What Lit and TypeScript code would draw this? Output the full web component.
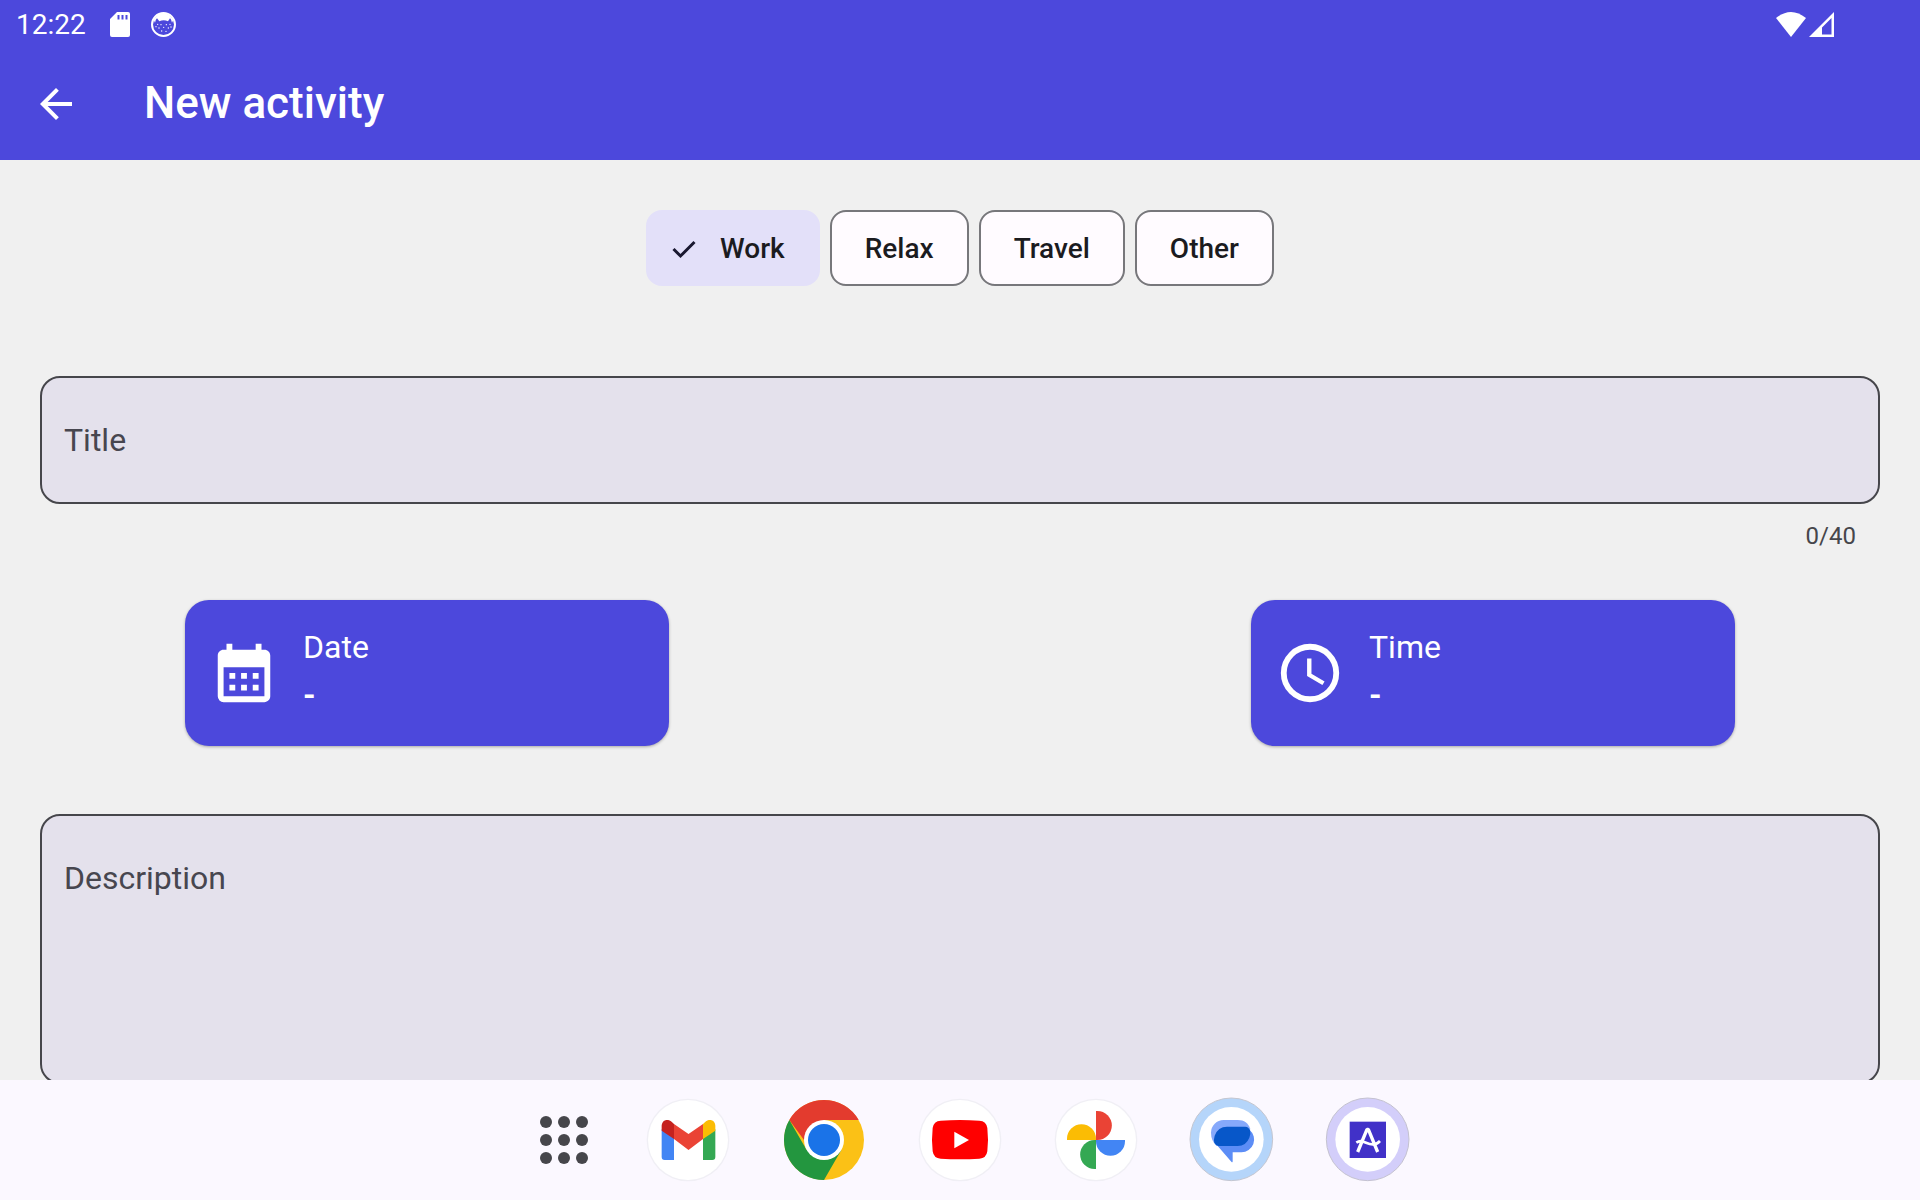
import { LitElement, html, css, svg } from "lit";
import { customElement, state } from "lit/decorators.js";
import { classMap } from "lit/directives/class-map.js";

const sdCard = html`<svg class="sd" viewBox="0 0 20 25" aria-hidden="true">
  <path fill="#fff" fill-rule="evenodd" d="M7 0H18a2 2 0 0 1 2 2V23a2 2 0 0 1-2 2H2a2 2 0 0 1-2-2V7zM7.500 3v4.500h2V3zM11.500 3v4.500h2V3zM15.500 3v4.500h2V3z"/>
</svg>`;

const catBadge = html`<svg class="cat" viewBox="0 0 75 75" aria-hidden="true">
  <circle cx="37.500" cy="37.500" r="34.500" fill="none" stroke="#fff" stroke-width="6"/>
  <path fill="#fff" d="M8 24Q20 3 37 3T67 24L63 32Q60 20 57 19L51 28Q38 22 25 28L18 19Q14 21 12 32z"/>
  <g fill="#fff">
    <circle cx="20" cy="37" r="2"/><circle cx="30" cy="38" r="2"/><circle cx="46" cy="38" r="2"/>
    <circle cx="57" cy="37" r="2"/><circle cx="24" cy="48" r="2"/><circle cx="38" cy="46" r="2"/>
    <circle cx="52" cy="48" r="2"/><circle cx="32" cy="57" r="2"/><circle cx="45" cy="58" r="2"/>
    <circle cx="60" cy="45" r="2"/><circle cx="15" cy="44" r="2"/>
  </g>
</svg>`;

const wifi = html`<svg class="wifi" viewBox="0 0 30 25" aria-hidden="true">
  <path fill="#fff" d="M0 6Q15-6 30 6L15 25z"/>
</svg>`;

const signal = html`<svg class="signal" viewBox="0 0 25 25" aria-hidden="true">
  <path fill="#fff" fill-rule="evenodd" d="M25 0V25H0zM22.500 6L13 15.500V22.500H22.500z"/>
</svg>`;

const backArrow = html`<svg viewBox="0 0 24 24" aria-hidden="true">
  <path fill="#fff" d="M20 11H7.830l5.590-5.590L12 4l-8 8 8 8 1.410-1.410L7.830 13H20v-2z"/>
</svg>`;

const check = html`<svg class="check" viewBox="0 0 24 20" aria-hidden="true">
  <path fill="none" stroke="#1a1830" stroke-width="3" d="M1.500 10L8.500 17L22.500 3"/>
</svg>`;

const calendar = html`<svg class="glyph" viewBox="0 0 24 24" aria-hidden="true">
  <path fill="#fff" fill-rule="evenodd" d="M19 4h-1V2h-2v2H8V2H6v2H5c-1.110 0-2 .9-2 2v14a2 2 0 0 0 2 2h14c1.100 0 2-.9 2-2V6c0-1.100-.9-2-2-2zm0 16H5V10h14z"/>
  <path fill="#fff" d="M7 12h2v2H7zM11 12h2v2h-2zM15 12h2v2h-2zM7 16h2v2H7zM11 16h2v2h-2zM15 16h2v2h-2z"/>
</svg>`;

const clock = html`<svg class="glyph" viewBox="0 0 24 24" aria-hidden="true">
  <circle cx="12" cy="12" r="9" fill="none" stroke="#fff" stroke-width="2"/>
  <path fill="#fff" d="M12.500 7H11v6l5.250 3.150.75-1.230-4.500-2.670z"/>
</svg>`;

const plate = svg`<circle cx="120" cy="120" r="124" fill="#f0eff5"/><circle cx="120" cy="120" r="120" fill="#fff"/>`;

const gmail = svg`${plate}
  <path fill="#4285f4" d="M41 88H78V180H50a9 9 0 0 1-9-9z"/>
  <path fill="#34a853" d="M165 88H202V171a9 9 0 0 1-9 9H165z"/>
  <path fill="#ea4335" d="M78 72L121.500 102L165 72V117L121.500 150L78 117z"/>
  <path fill="#c5221f" d="M41 92V78C41 60 58 55 69 64L78 72V117z"/>
  <path fill="#fbbc04" d="M202 92V78C202 60 185 55 174 64L165 72V117z"/>`;

const chrome = svg`
  <circle cx="120" cy="120" r="120" fill="#fbc116"/>
  <path fill="#e33b2e" d="M16 60A120 120 0 0 1 224 60H120V120H60z"/>
  <path fill="#23963f" d="M16 60A120 120 0 0 0 120 240L172 150L120 120L68 150z"/>
  <circle cx="120" cy="120" r="60" fill="#fff"/>
  <circle cx="120" cy="120" r="48" fill="#1a73e8"/>`;

const youtube = svg`${plate}
  <path fill="#f00" d="M62 62Q120 58 178 62Q199 63 202 84Q206 119 202 154Q199 175 178 176Q120 180 62 176Q41 175 38 154Q34 119 38 84Q41 63 62 62z"/>
  <path fill="#fff" d="M103 95L147 120L103 145z"/>`;

const photos = svg`${plate}
  <path fill="#ea4335" d="M120 33h4a43.500 43.500 0 0 1 0 87h-4z"/>
  <path fill="#4285f4" d="M207 120v4a43.500 43.500 0 0 1-87 0v-4z"/>
  <path fill="#34a853" d="M120 207h-4a43.500 43.500 0 0 1 0-87h4z"/>
  <path fill="#fbbc04" d="M33 120v-4a43.500 43.500 0 0 1 87 0v4z"/>`;

const messages = svg`
  <circle cx="118" cy="118" r="124" fill="#b5d5fa" stroke="#c4c6d0" stroke-width="3"/>
  <circle cx="118" cy="118" r="97" fill="#fff"/>
  <path fill="#86a9fb" d="M95 60H137C157 60 169 70 174 85L176 112L120 138H74Q57 122 57 98A38 38 0 0 1 95 60z"/>
  <path fill="#5c8df6" d="M66 125L118 185Q122 189 122 184V157H148A38 38 0 0 0 173 90L150 112L100 137z"/>
  <path fill="#0757c9" d="M105 80H160Q170 81 174 91Q177 101 172 113Q162 138 137 138H80Q71 137 67 128Q64 120 68 107Q78 80 105 80z"/>`;

const aApp = svg`
  <circle cx="119" cy="118" r="124" fill="#d3cefa" stroke="#c4c2d0" stroke-width="3"/>
  <circle cx="119" cy="118" r="97" fill="#fff"/>
  <rect x="65" y="65" width="109" height="109" fill="#4131c8"/>
  <path fill="none" stroke="#fff" stroke-width="10" stroke-linejoin="bevel" d="M89 156L117 88H121L149 156"/>
  <path fill="none" stroke="#fff" stroke-width="8" d="M85 128C104 115 116 135 136 133Q148 132 156 123"/>`;

const dockApps = [
  { name: "Gmail", art: gmail },
  { name: "Chrome", art: chrome },
  { name: "YouTube", art: youtube },
  { name: "Photos", art: photos },
  { name: "Messages", art: messages },
  { name: "Activities", art: aApp },
];

const categories = ["Work", "Relax", "Travel", "Other"];

@customElement("app-root")
export class AppRoot extends LitElement {
  @state() private category = "Work";
  @state() private titleText = "";

  static styles = css`
    :host {
      display: flex;
      flex-direction: column;
      height: 100vh;
      overflow: hidden;
      background: #f0f0f0;
      color: #1b1b1f;
      font-family: Roboto, "Liberation Sans", sans-serif;
    }
    * { box-sizing: border-box; }
    svg { display: block; }
    button {
      font: inherit;
      color: inherit;
      border: 0;
      margin: 0;
      padding: 0;
      background: none;
      cursor: pointer;
    }
    .top { flex: none; background: #4c48dc; color: #fff; }
    .status {
      display: flex;
      align-items: center;
      justify-content: space-between;
      height: 48px;
      padding: 0 86px 0 16px;
    }
    .group { display: flex; align-items: center; }
    .time { font-size: 28px; line-height: 32px; padding-top: 2px; margin-right: 24px; }
    .sd { width: 20px; height: 25px; margin-right: 21px; }
    .cat { width: 25px; height: 25px; }
    .wifi { width: 30px; height: 25px; margin-right: 3px; }
    .signal { width: 25px; height: 25px; }
    .toolbar {
      display: flex;
      align-items: center;
      gap: 64px;
      height: 112px;
      padding: 0 32px;
    }
    .back { width: 48px; height: 48px; }
    .heading { margin: 0; padding-bottom: 2px; font-size: 44px; line-height: 56px; font-weight: 500; }
    .content {
      flex: 1;
      min-height: 0;
      overflow: hidden;
      padding: 50px 40px 0;
    }
    .chips { display: flex; justify-content: center; gap: 10px; margin-bottom: 90px; }
    .chip {
      display: flex;
      align-items: center;
      gap: 24px;
      height: 76px;
      padding: 2px 33px 0;
      border: 2px solid #77777b;
      border-radius: 16px;
      background: #fffbff;
      font-size: 28px;
      line-height: 40px;
      font-weight: 500;
    }
    .chip.selected { background: #e3e0f9; border-color: #e3e0f9; padding-left: 24px; }
    .check { width: 24px; height: 20px; }
    .field {
      display: flex;
      border: 2px solid #46464b;
      border-radius: 20px;
      background: #e4e1ec;
      color: #47464f;
      font-size: 32px;
      line-height: 48px;
      padding: 38px 22px;
    }
    .field.tall { flex-direction: column; min-height: 270px; }
    .entry {
      flex: 1;
      min-width: 0;
      border: 0;
      outline: 0;
      padding: 0 0 0 16px;
      background: none;
      color: #1b1b1f;
      font: inherit;
      resize: none;
    }
    .tall .entry { padding: 0; }
    .counter {
      display: block;
      margin-top: 16px;
      padding-right: 24px;
      text-align: right;
      color: #46464b;
      font-size: 24px;
      line-height: 32px;
    }
    .pickers {
      display: flex;
      justify-content: space-between;
      gap: 40px;
      padding: 0 145px;
      margin: 48px 0 68px;
    }
    .picker {
      display: flex;
      align-items: center;
      gap: 24px;
      flex: 0 1 484px;
      padding: 23px 24px;
      border-radius: 24px;
      background: #4c48dc;
      color: #fff;
      text-align: left;
      font-size: 32px;
      line-height: 48px;
      box-shadow: 0 1px 3px rgba(0, 0, 0, 0.3);
    }
    .glyph { width: 70px; height: 70px; }
    .lines { display: flex; flex-direction: column; padding-bottom: 4px; }
    .value { font-weight: 700; }
    .dock {
      flex: none;
      display: flex;
      align-items: center;
      justify-content: center;
      gap: 56px;
      height: 120px;
      padding-left: 24px;
      background: #fbf8ff;
    }
    .drawer {
      display: grid;
      grid-template-columns: repeat(3, 12px);
      justify-content: center;
      gap: 6px;
      width: 56px;
    }
    .dot { width: 12px; height: 12px; border-radius: 50%; background: #46464b; }
    .app { width: 80px; height: 80px; }
    .app svg { width: 80px; height: 80px; overflow: visible; }
  `;

  private onTitle(event: Event) {
    this.titleText = (event.target as HTMLInputElement).value;
  }

  render() {
    return html`
      <header class="top">
        <div class="status">
          <div class="group"><span class="time">12:22</span>${sdCard}${catBadge}</div>
          <div class="group">${wifi}${signal}</div>
        </div>
        <div class="toolbar">
          <button class="back" aria-label="Back">${backArrow}</button>
          <h1 class="heading">New activity</h1>
        </div>
      </header>

      <main class="content">
        <div class="chips" role="group" aria-label="Category">
          ${categories.map(
            (name) => html`<button
              class=${classMap({ chip: true, selected: name === this.category })}
              aria-pressed=${name === this.category}
              @click=${() => (this.category = name)}
            >${name === this.category ? check : ""}<span>${name}</span></button>`
          )}
        </div>

        <div class="field">
          <label for="title">Title</label>
          <input class="entry" id="title" type="text" maxlength="40" @input=${this.onTitle} />
        </div>
        <output class="counter" for="title">${this.titleText.length}/40</output>

        <div class="pickers">
          <button class="picker">
            ${calendar}<span class="lines"><span>Date</span><span class="value">-</span></span>
          </button>
          <button class="picker">
            ${clock}<span class="lines"><span>Time</span><span class="value">-</span></span>
          </button>
        </div>

        <div class="field tall">
          <label for="description">Description</label>
          <textarea class="entry" id="description"></textarea>
        </div>
      </main>

      <nav class="dock" aria-label="Apps">
        <button class="drawer" aria-label="All apps">
          ${Array.from({ length: 9 }, () => html`<span class="dot"></span>`)}
        </button>
        ${dockApps.map(
          (app) => html`<button class="app" aria-label=${app.name}>
            <svg viewBox="0 0 240 240" aria-hidden="true">${app.art}</svg>
          </button>`
        )}
      </nav>
    `;
  }
}
